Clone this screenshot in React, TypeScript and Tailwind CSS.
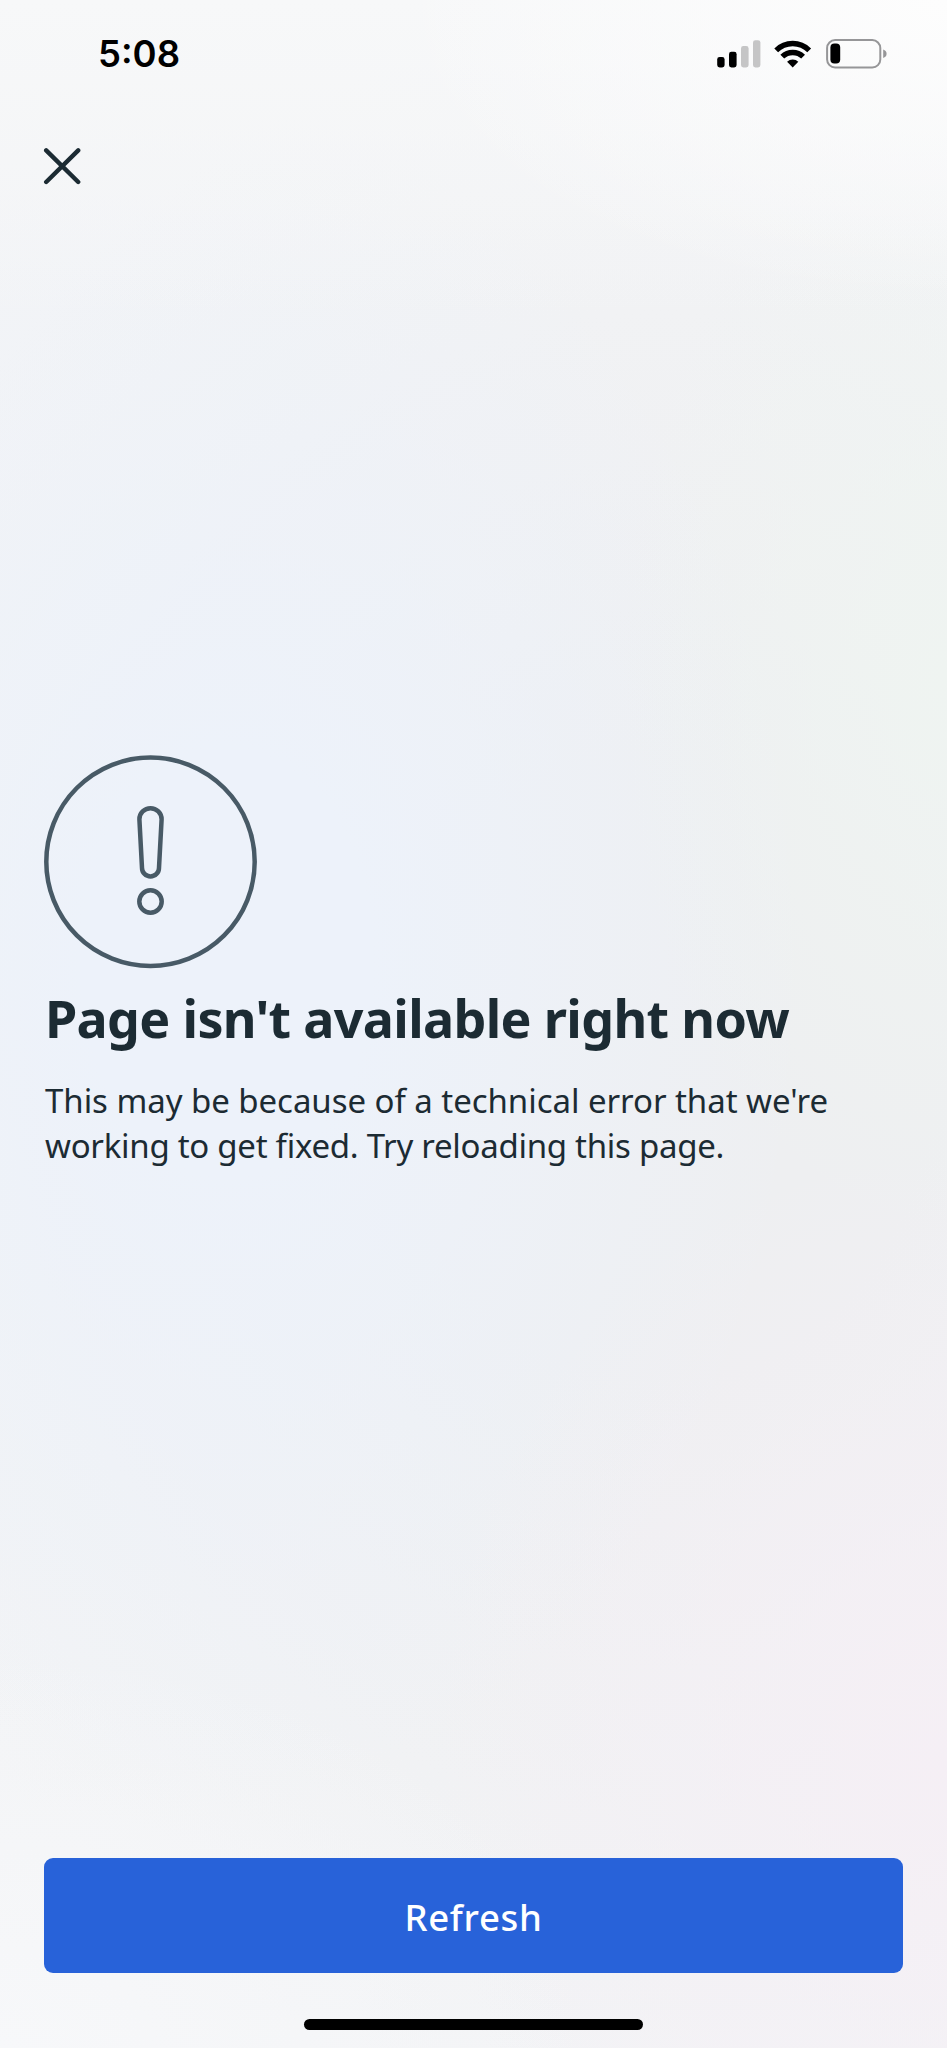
import React from 'react';

interface Props {
  title: string;
  onClose: () => void;
  onRefresh: () => void;
}

const StatusBar: React.FC = () => (
  <div className="flex h-[108px] items-center justify-between pl-[98px] pr-[59px] text-black">
    <span className="pt-px font-['Inter',sans-serif] text-[36.5px] font-semibold leading-none">5:08</span>
    <div className="flex items-center">
      <svg width="44" height="28" viewBox="0 0 44 28">
        <rect x="0.2" y="17" width="7.4" height="10.4" rx="2.4" />
        <rect x="12" y="11.8" width="7.6" height="15.6" rx="2.4" />
        <rect x="24" y="6" width="7.6" height="21.4" rx="2.4" fill="#c5c5c6" />
        <rect x="36" y="0.2" width="7.4" height="27.2" rx="2.4" fill="#c5c5c6" />
      </svg>
      <svg className="ml-[13px]" width="38" height="28" viewBox="0 0 38 28">
        <g fill="none" stroke="#000" strokeWidth="5.4">
          <path d="M2.2 10.3a23.4 23.4 0 0 1 33 0" />
          <path d="M8.3 16.7a14.8 14.8 0 0 1 20.8 0" />
        </g>
        <path d="M18.7 27.4l-5.6-5.7a8 8 0 0 1 11.2 0z" />
      </svg>
      <svg className="ml-[14px]" width="62" height="30" viewBox="0 0 62 30">
        <rect x="1.1" y="1.1" width="53.2" height="27.4" rx="8" fill="none" stroke="#969698" strokeWidth="2" />
        <rect x="4.4" y="4.6" width="9.8" height="20" rx="4" />
        <path d="M57.2 10.6c2 .6 3.4 2.2 3.4 4.2s-1.4 3.6-3.4 4.2z" fill="#969698" />
      </svg>
    </div>
  </div>
);

const ErrorIcon: React.FC = () => (
  <svg
    width="214"
    height="214"
    viewBox="0 0 214 214"
    fill="none"
    stroke="#485a66"
    strokeWidth="4.5"
    strokeLinejoin="round"
  >
    <circle cx="106.5" cy="106.7" r="104.2" />
    <path d="M95.4 64.3a11.1 11.1 0 1 1 22.2 0l-2.6 48.6a8.5 8.5 0 0 1-17 0z" />
    <circle cx="106.5" cy="146.5" r="11.2" />
  </svg>
);

const ErrorPage: React.FC<Props> = ({ title, onClose, onRefresh }) => (
  <div className="flex h-[2048px] w-[947px] flex-col overflow-hidden bg-[#f3f4f6] bg-[radial-gradient(ellipse_560px_300px_at_100%_0%,#fdfdfd,#fdfdfd00),linear-gradient(to_bottom,#f7f8f9,#f7f8f900_320px),radial-gradient(ellipse_330px_560px_at_100%_33%,#eff4f1,#eff4f100),radial-gradient(ellipse_520px_620px_at_100%_86%,#f5eff5,#f5eff500),radial-gradient(ellipse_580px_850px_at_24%_47%,#edf2fa_25%,#edf2fa00),radial-gradient(ellipse_600px_400px_at_0%_100%,#f7f8fa,#f7f8fa00),radial-gradient(ellipse_900px_1050px_at_70%_52%,#eeeff1_30%,#eeeff100)] text-[#1c2b33]">
    <StatusBar />

    <button onClick={onClose} aria-label="Close" className="ml-[43px] mt-[39px] h-[38px] w-[38px]">
      <svg width="38" height="38" viewBox="0 0 38 38" stroke="currentColor" strokeWidth="4.4" strokeLinecap="round">
        <path d="M3.2 3.4l32 31.6M35.2 3.4l-32 31.6" />
      </svg>
    </button>

    <main className="ml-[44px] mt-[570px] flex-1">
      <ErrorIcon />
      <h1 className="ml-px mt-[14px] whitespace-nowrap font-['Noto_Sans',sans-serif] text-[52px] font-bold leading-[70px] tracking-[-0.67px]">
        {title}
      </h1>
      <p className="ml-px mt-[25px] flex flex-col whitespace-nowrap font-['Noto_Sans',sans-serif] text-[33px] leading-[45px]">
        <span className="tracking-[-0.05px]">This may be because of a technical error that we're</span>
        <span className="tracking-[-0.28px]">working to get fixed. Try reloading this page.</span>
      </p>
    </main>

    <button
      onClick={onRefresh}
      className="ml-[44px] h-[115px] w-[859px] rounded-[9px] bg-[#2862d9] pt-[4px] font-['Noto_Sans',sans-serif] text-[36.5px] font-medium tracking-[0.7px] text-white"
    >
      Refresh
    </button>
    <div className="mb-[18px] mt-[46px] h-[11px] w-[339px] self-center rounded-full bg-black" />
  </div>
);

export default function App() {
  return (
    <ErrorPage
      title="Page isn't available right now"
      onClose={() => window.history.back()}
      onRefresh={() => window.location.reload()}
    />
  );
}
